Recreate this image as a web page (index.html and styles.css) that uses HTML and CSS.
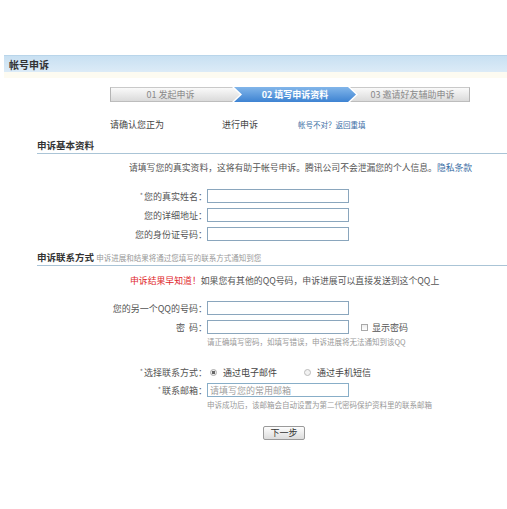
FILE: index.html
```html
<!DOCTYPE html>
<html lang="zh-CN">
<head>
<meta charset="utf-8">
<title>帐号申诉</title>
<link rel="stylesheet" href="styles.css">
</head>
<body>
<div class="page">
  <div class="titlebar">帐号申诉</div>
  <div class="cream"></div>

  <div class="steps">
    <div class="step step-1">01 发起申诉</div>
    <div class="step step-2">02 填写申诉资料</div>
    <div class="step step-3">03 邀请好友辅助申诉</div>
  </div>

  <div class="confirm">
    <span class="c1">请确认您正为</span>
    <span class="c2">进行申诉</span>
    <a class="c3" href="#">帐号不对？返回重填</a>
  </div>

  <div class="section-h">申诉基本资料</div>
  <p class="intro">请填写您的真实资料，这将有助于帐号申诉。腾讯公司不会泄漏您的个人信息。<a href="#" class="link">隐私条款</a></p>

  <div class="form form-basic">
    <div class="row"><label class="lbl"><span class="req">*</span>您的真实姓名：</label><input class="txt" type="text"></div>
    <div class="row"><label class="lbl">您的详细地址：</label><input class="txt" type="text"></div>
    <div class="row"><label class="lbl">您的身份证号码：</label><input class="txt" type="text"></div>
  </div>

  <div class="section-h section-2">申诉联系方式 <span class="sub">申诉进展和结果将通过您填写的联系方式通知到您</span></div>
  <p class="notice"><span class="red">申诉结果早知道！</span>如果您有其他的QQ号码，申诉进展可以直接发送到这个QQ上</p>

  <div class="form form-qq">
    <div class="row"><label class="lbl">您的另一个QQ的号码：</label><input class="txt" type="text"></div>
    <div class="row"><label class="lbl">密&nbsp;&nbsp;码：</label><input class="txt" type="password"><span class="chk"></span><span class="chk-label">显示密码</span></div>
  </div>
  <div class="hint hint-1">请正确填写密码，如填写错误，申诉进展将无法通知到该QQ</div>

  <div class="form form-contact">
    <div class="row"><label class="lbl"><span class="req">*</span>选择联系方式：</label>
      <span class="radio on"></span><span class="opt">通过电子邮件</span>
      <span class="radio"></span><span class="opt">通过手机短信</span>
    </div>
    <div class="row"><label class="lbl"><span class="req">*</span>联系邮箱：</label><input class="txt email" type="text" placeholder="请填写您的常用邮箱"></div>
  </div>
  <div class="hint hint-2">申诉成功后，该邮箱会自动设置为第二代密码保护资料里的联系邮箱</div>

  <button class="btn" type="button">下一步</button>
</div>
</body>
</html>
```

FILE: styles.css
```css
* { box-sizing: border-box; }

body {
  margin: 0;
  background: #fff;
  font-family: "Noto Sans CJK SC", "Noto Sans", sans-serif;
  font-size: 9px;
  color: #444;
}

.page {
  padding-top: 55px;
  width: 507px;
}

.titlebar {
  margin-left: 4px;
  height: 17px;
  line-height: 17px;
  padding-left: 5px;
  font-size: 10px;
  font-weight: bold;
  color: #333;
  background: linear-gradient(#c8e0f2, #dcebf7);
  border-top: 1px solid #b9d5ea;
}

.cream {
  margin-left: 4px;
  height: 6px;
  background: #fdfbf1;
}

/* step bar */
.steps {
  display: flex;
  margin: 9px 0 0 110px;
  height: 15px;
}

.step {
  height: 15px;
  line-height: 13px;
  font-size: 9px;
  text-align: center;
}

.step-1, .step-3 {
  color: #8a8a8a;
  background: linear-gradient(#fafafa, #dadada);
  border-top: 1px solid #c9c9c9;
  border-bottom: 1px solid #bdbdbd;
}

.step-1 {
  width: 130px;
  border-left: 1px solid #b5b5b5;
  padding-right: 10px;
  clip-path: polygon(0 0, calc(100% - 8px) 0, 100% 50%, calc(100% - 8px) 100%, 0 100%);
}

.step-2 {
  width: 122px;
  margin-left: -6px;
  color: #fff;
  font-weight: bold;
  line-height: 15px;
  background: linear-gradient(#82b6ea, #3e83d2);
  clip-path: polygon(0 0, calc(100% - 8px) 0, 100% 50%, calc(100% - 8px) 100%, 0 100%, 8px 50%);
}

.step-3 {
  width: 120px;
  margin-left: -6px;
  padding-left: 6px;
  border-right: 1px solid #b5b5b5;
  clip-path: polygon(0 0, 100% 0, 100% 100%, 0 100%, 8px 50%);
}

/* confirm line */
.confirm {
  display: flex;
  align-items: center;
  margin: 16px 0 0 110px;
  height: 14px;
  line-height: 14px;
}

.c1 { width: 112px; }
.c2 { width: 76px; }
.c3 {
  font-size: 7.5px;
  color: #3a6ea5;
  text-decoration: none;
}

/* section headings */
.section-h {
  margin: 6px 0 0 37px;
  height: 16px;
  line-height: 14px;
  padding-bottom: 1px;
  font-size: 9.5px;
  font-weight: bold;
  color: #333;
  border-bottom: 1px solid #aac4d6;
}

.section-2 {
  margin-top: 9px;
}

.sub {
  font-size: 7.5px;
  font-weight: normal;
  color: #999;
}

.intro {
  margin: 7px 0 0 129px;
  line-height: 14px;
  font-size: 8.8px;
  color: #555;
}

.link {
  color: #3a6ea5;
  text-decoration: none;
}

.notice {
  margin: 8px 0 0 130px;
  line-height: 14px;
  font-size: 8.85px;
  color: #555;
}

.red { color: #e0262b; }

/* forms */
.form {
  display: flex;
  flex-direction: column;
  gap: 5px;
}

.form-basic { margin-top: 14px; }
.form-qq { margin-top: 13px; }
.form-contact { margin-top: 18px; gap: 4px; }

.row {
  display: flex;
  align-items: center;
  height: 14px;
}

.lbl {
  width: 207px;
  flex: none;
  text-align: right;
  color: #555;
  white-space: nowrap;
}

.req {
  font-size: 7px;
  color: #777;
  vertical-align: 2px;
  margin-right: 1px;
}

.txt {
  width: 142px;
  height: 14px;
  margin: 0;
  padding: 0 2px;
  border: 1px solid #8aa6bd;
  background: #fff;
  font-family: inherit;
  font-size: 9px;
  outline: none;
}

.txt::placeholder { color: #a0a0a0; }

.email { border-color: #88aec8; }

.chk {
  width: 7px;
  height: 7px;
  margin-left: 12px;
  border: 1px solid #a9a9a9;
  background: linear-gradient(#eee, #fff);
}

.chk-label {
  margin-left: 4px;
  color: #555;
}

.radio {
  width: 7px;
  height: 7px;
  margin-left: 3px;
  border-radius: 50%;
  border: 1px solid #bbb;
  background: #f2f2f2;
}

.radio.on {
  background: radial-gradient(circle, #666 0 1.6px, #eee 2px);
  border-color: #aaa;
}

.opt {
  margin-left: 6px;
  width: 78px;
  color: #444;
}

.hint {
  margin: 3px 0 0 207px;
  font-size: 7.5px;
  line-height: 10px;
  color: #999;
}

.btn {
  display: block;
  margin: 16px 0 0 263px;
  width: 42px;
  height: 14px;
  padding: 0;
  border: 1px solid #9a9a9a;
  border-radius: 2px;
  background: linear-gradient(#fdfdfd, #dcdcdc);
  font-family: inherit;
  font-size: 9px;
  line-height: 12px;
  color: #333;
}
```
